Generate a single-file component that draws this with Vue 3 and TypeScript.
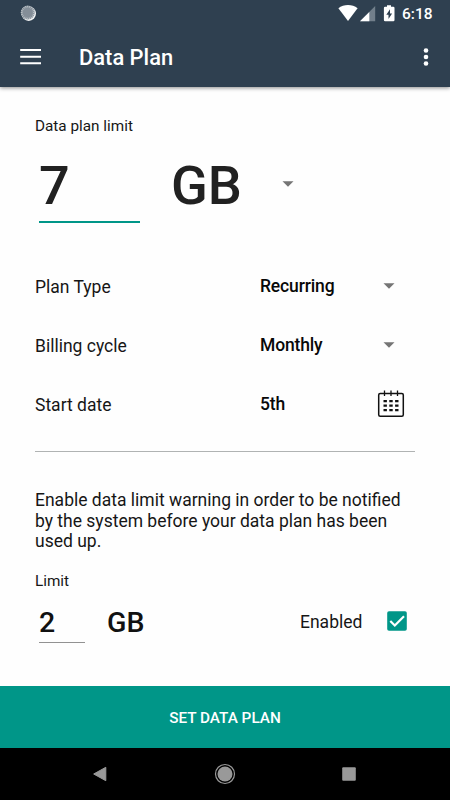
<script setup lang="ts">
import { ref } from 'vue'

interface PlanOption {
  label: string
  value: string
  control: 'menu' | 'calendar'
}

const dataLimit = ref('7')
const warningLimit = ref('2')
const unit = ref('GB')
const warningEnabled = ref(true)

const options: PlanOption[] = [
  { label: 'Plan Type', value: 'Recurring', control: 'menu' },
  { label: 'Billing cycle', value: 'Monthly', control: 'menu' },
  { label: 'Start date', value: '5th', control: 'calendar' },
]

const ticks = Array.from({ length: 20 }, (_, i) => i * 18)
</script>

<template>
  <div class="screen">
    <header class="top">
      <div class="status">
        <svg class="sync" width="18" height="18" viewBox="0 0 18 18">
          <circle cx="8.700" cy="8.600" r="7.300" fill="#f4f5f6" />
          <circle cx="7.700" cy="7.600" r="7" fill="#848e98" />
          <line
            v-for="angle in ticks"
            :key="angle"
            x1="7.700"
            y1="0.800"
            x2="7.700"
            y2="2.400"
            stroke="#c3c9cd"
            stroke-width="0.900"
            :transform="`rotate(${angle} 7.7 7.6)`"
          />
        </svg>
        <svg class="indicators" width="60" height="18" viewBox="0 0 60 18">
          <path d="M.4 3.300C5.800-1.100 14.200-1.100 19.600 3.300L10 15.900z" fill="#fff" />
          <path d="M37.200 1v15.200H22z" fill="#727f8b" />
          <path d="M31.300 6.900v9.300H22z" fill="#fff" />
          <path d="M49 1.700V.200h4v1.500h2.300q1.200 0 1.200 1.200v12.200q0 1.200-1.200 1.200h-8.200q-1.200 0-1.200-1.200V2.900q0-1.200 1.200-1.200z" fill="#fff" />
          <path d="M52 4.300l-3.700 5.400h2.200v4.200l3.600-5.500H52z" fill="#2f4050" />
        </svg>
        <span class="clock">6:18</span>
      </div>
      <div class="toolbar">
        <button class="bare" aria-label="Menu">
          <svg width="22" height="18" viewBox="0 0 22 18" fill="#fff">
            <path d="M.200 1h20.800v2H.200zM.200 7.700h20.800v2H.200zM.200 14.200h20.800v2H.200z" />
          </svg>
        </button>
        <h1>Data Plan</h1>
        <button class="bare more" aria-label="More">
          <svg width="6" height="20" viewBox="0 0 6 20" fill="#fff">
            <circle cx="3" cy="3.500" r="2.300" />
            <circle cx="3" cy="10" r="2.300" />
            <circle cx="3" cy="16.500" r="2.300" />
          </svg>
        </button>
      </div>
    </header>

    <main class="content">
      <div class="caption">Data plan limit</div>
      <div class="amount">
        <div class="field">{{ dataLimit }}</div>
        <div class="unit">{{ unit }}</div>
        <svg class="arrow" width="12" height="6" viewBox="0 0 12 6"><path d="M.5.300h11L6 5.800z" fill="#757575" /></svg>
      </div>

      <div class="options">
        <div v-for="option in options" :key="option.label" class="option">
          <span class="label">{{ option.label }}</span>
          <span class="value" :class="option.control">{{ option.value }}</span>
          <svg v-if="option.control === 'menu'" class="arrow" width="12" height="6" viewBox="0 0 12 6">
            <path d="M.5.300h11L6 5.800z" fill="#757575" />
          </svg>
          <svg v-else class="calendar" width="28" height="28" viewBox="0 0 28 28">
            <rect x="1.700" y="3.500" width="24.600" height="22.800" rx="1.500" fill="none" stroke="#111" stroke-width="1.500" />
            <path d="M7.500.500v5.500M14 .500v5.500M20.500.500v5.500" stroke="#111" stroke-width="1.300" />
            <path d="M6.500 11.200h15M6.500 15.700h15M6.500 20.200h15" stroke="#111" stroke-width="2.200" stroke-dasharray="3.400 2.400" />
          </svg>
        </div>
      </div>

      <p class="note">Enable data limit warning in order to be notified by the system before your data plan has been used up.</p>

      <div class="caption second">Limit</div>
      <div class="warning">
        <div class="field small">{{ warningLimit }}</div>
        <div class="unit small">{{ unit }}</div>
        <span class="label enabled">Enabled</span>
        <button class="bare" role="checkbox" :aria-checked="warningEnabled" aria-label="Enabled" @click="warningEnabled = !warningEnabled">
          <svg width="20" height="20" viewBox="0 0 20 20">
            <rect x=".2" y=".2" width="19.600" height="19.600" rx="1.800" fill="#009688" />
            <path v-if="warningEnabled" d="M3.300 10l4.500 4.500 9.200-9.200" fill="none" stroke="#fff" stroke-width="2.200" />
          </svg>
        </button>
      </div>
    </main>

    <button class="submit">SET DATA PLAN</button>
    <nav class="system">
      <svg width="14" height="16" viewBox="0 0 14 16"><path d="M12.800 1.300v13.400L.700 8z" fill="#999" stroke="#999" stroke-linejoin="round" /></svg>
      <svg width="22" height="22" viewBox="0 0 22 22">
        <circle cx="11" cy="11" r="9.500" fill="none" stroke="#999" stroke-width="1.200" />
        <circle cx="11" cy="11" r="7.500" fill="#999" />
      </svg>
      <svg width="14" height="14" viewBox="0 0 14 14"><rect x=".2" y=".2" width="13.600" height="13.600" rx="1" fill="#999" /></svg>
    </nav>
  </div>
</template>

<style>
body {
  margin: 0;
  background: #fff;
}
</style>

<style scoped>
.screen {
  display: flex;
  flex-direction: column;
  width: 450px;
  height: 800px;
  overflow: hidden;
  background: #fefefe;
  color: #161616;
  font-family: Roboto, sans-serif;
}
svg {
  display: block;
  flex: none;
}
.bare {
  padding: 0;
  border: 0;
  background: none;
}
.top {
  flex: none;
  height: 87px;
  background: #2f4050;
  color: #fff;
  box-shadow: 0 1px 4px rgba(0, 0, 0, 0.45);
}
.status {
  display: flex;
  align-items: flex-start;
  height: 26px;
  padding: 5px 16px 0 20px;
  box-sizing: border-box;
}
.indicators {
  margin-left: auto;
}
.clock {
  width: 32px;
  margin-left: 4px;
  font-size: 15.5px;
  font-weight: 500;
  line-height: 18px;
}
.toolbar {
  display: flex;
  align-items: center;
  height: 62px;
  padding: 0 21px 0 20px;
}
.toolbar h1 {
  margin: 2px 0 0 37px;
  font-size: 21.9px;
  font-weight: 500;
  line-height: 30px;
}
.more {
  margin-left: auto;
}
.content {
  flex: none;
  height: 599px;
  padding: 0 35px;
  box-sizing: border-box;
}
.caption {
  padding-top: 29px;
  font-size: 15.3px;
  line-height: 20px;
}
.amount {
  display: flex;
  align-items: center;
  height: 87px;
  padding-left: 4px;
}
.field {
  width: 101px;
  height: 87px;
  box-sizing: border-box;
  border-bottom: 2px solid #009688;
  color: #212121;
  font-size: 54px;
  font-weight: 500;
  line-height: 99px;
}
.unit {
  align-self: flex-start;
  width: 111px;
  margin-left: 31px;
  color: #212121;
  font-size: 54px;
  font-weight: 500;
  line-height: 99px;
}
.amount .arrow {
  margin-top: 9px;
}
.options {
  height: 229px;
  padding-top: 34px;
  box-sizing: border-box;
  border-bottom: 1px solid #b0b3b3;
}
.option {
  display: grid;
  grid-template-columns: 225px 117px 38px;
  align-items: center;
  height: 59px;
}
.label,
.value {
  font-size: 17.5px;
  line-height: 24px;
}
.option .label {
  margin-top: 1px;
}
.value {
  margin-top: 1px;
  color: #080808;
  font-weight: 500;
  letter-spacing: -0.15px;
}
.value.menu {
  margin-top: -1px;
}
.option .arrow {
  margin: -1px 0 0 6px;
}
.option .calendar {
  margin-top: -1px;
}
.note {
  width: 380px;
  margin: 38px 0 0;
  font-size: 17.5px;
  line-height: 20.7px;
}
.caption.second {
  padding-top: 19px;
}
.warning {
  display: flex;
  align-items: center;
  height: 52px;
  padding-left: 4px;
}
.field.small {
  width: 46px;
  height: 52px;
  border-bottom: 1px solid #929292;
  color: #111;
  font-size: 28.5px;
  line-height: 63px;
}
.unit.small {
  width: 193px;
  margin-left: 22px;
  color: #111;
  font-size: 28.5px;
  line-height: 63px;
}
.enabled {
  width: 87px;
  margin-top: 10px;
}
.warning .bare {
  margin-top: 8px;
}
.submit {
  flex: none;
  height: 62px;
  padding: 2px 0 0;
  border: 0;
  background: #009688;
  color: #fff;
  font-family: inherit;
  font-size: 15.3px;
  font-weight: 500;
}
.system {
  display: flex;
  flex: 1;
  align-items: center;
  justify-content: space-between;
  padding: 0 94px 0 93px;
  background: #000;
}
</style>
